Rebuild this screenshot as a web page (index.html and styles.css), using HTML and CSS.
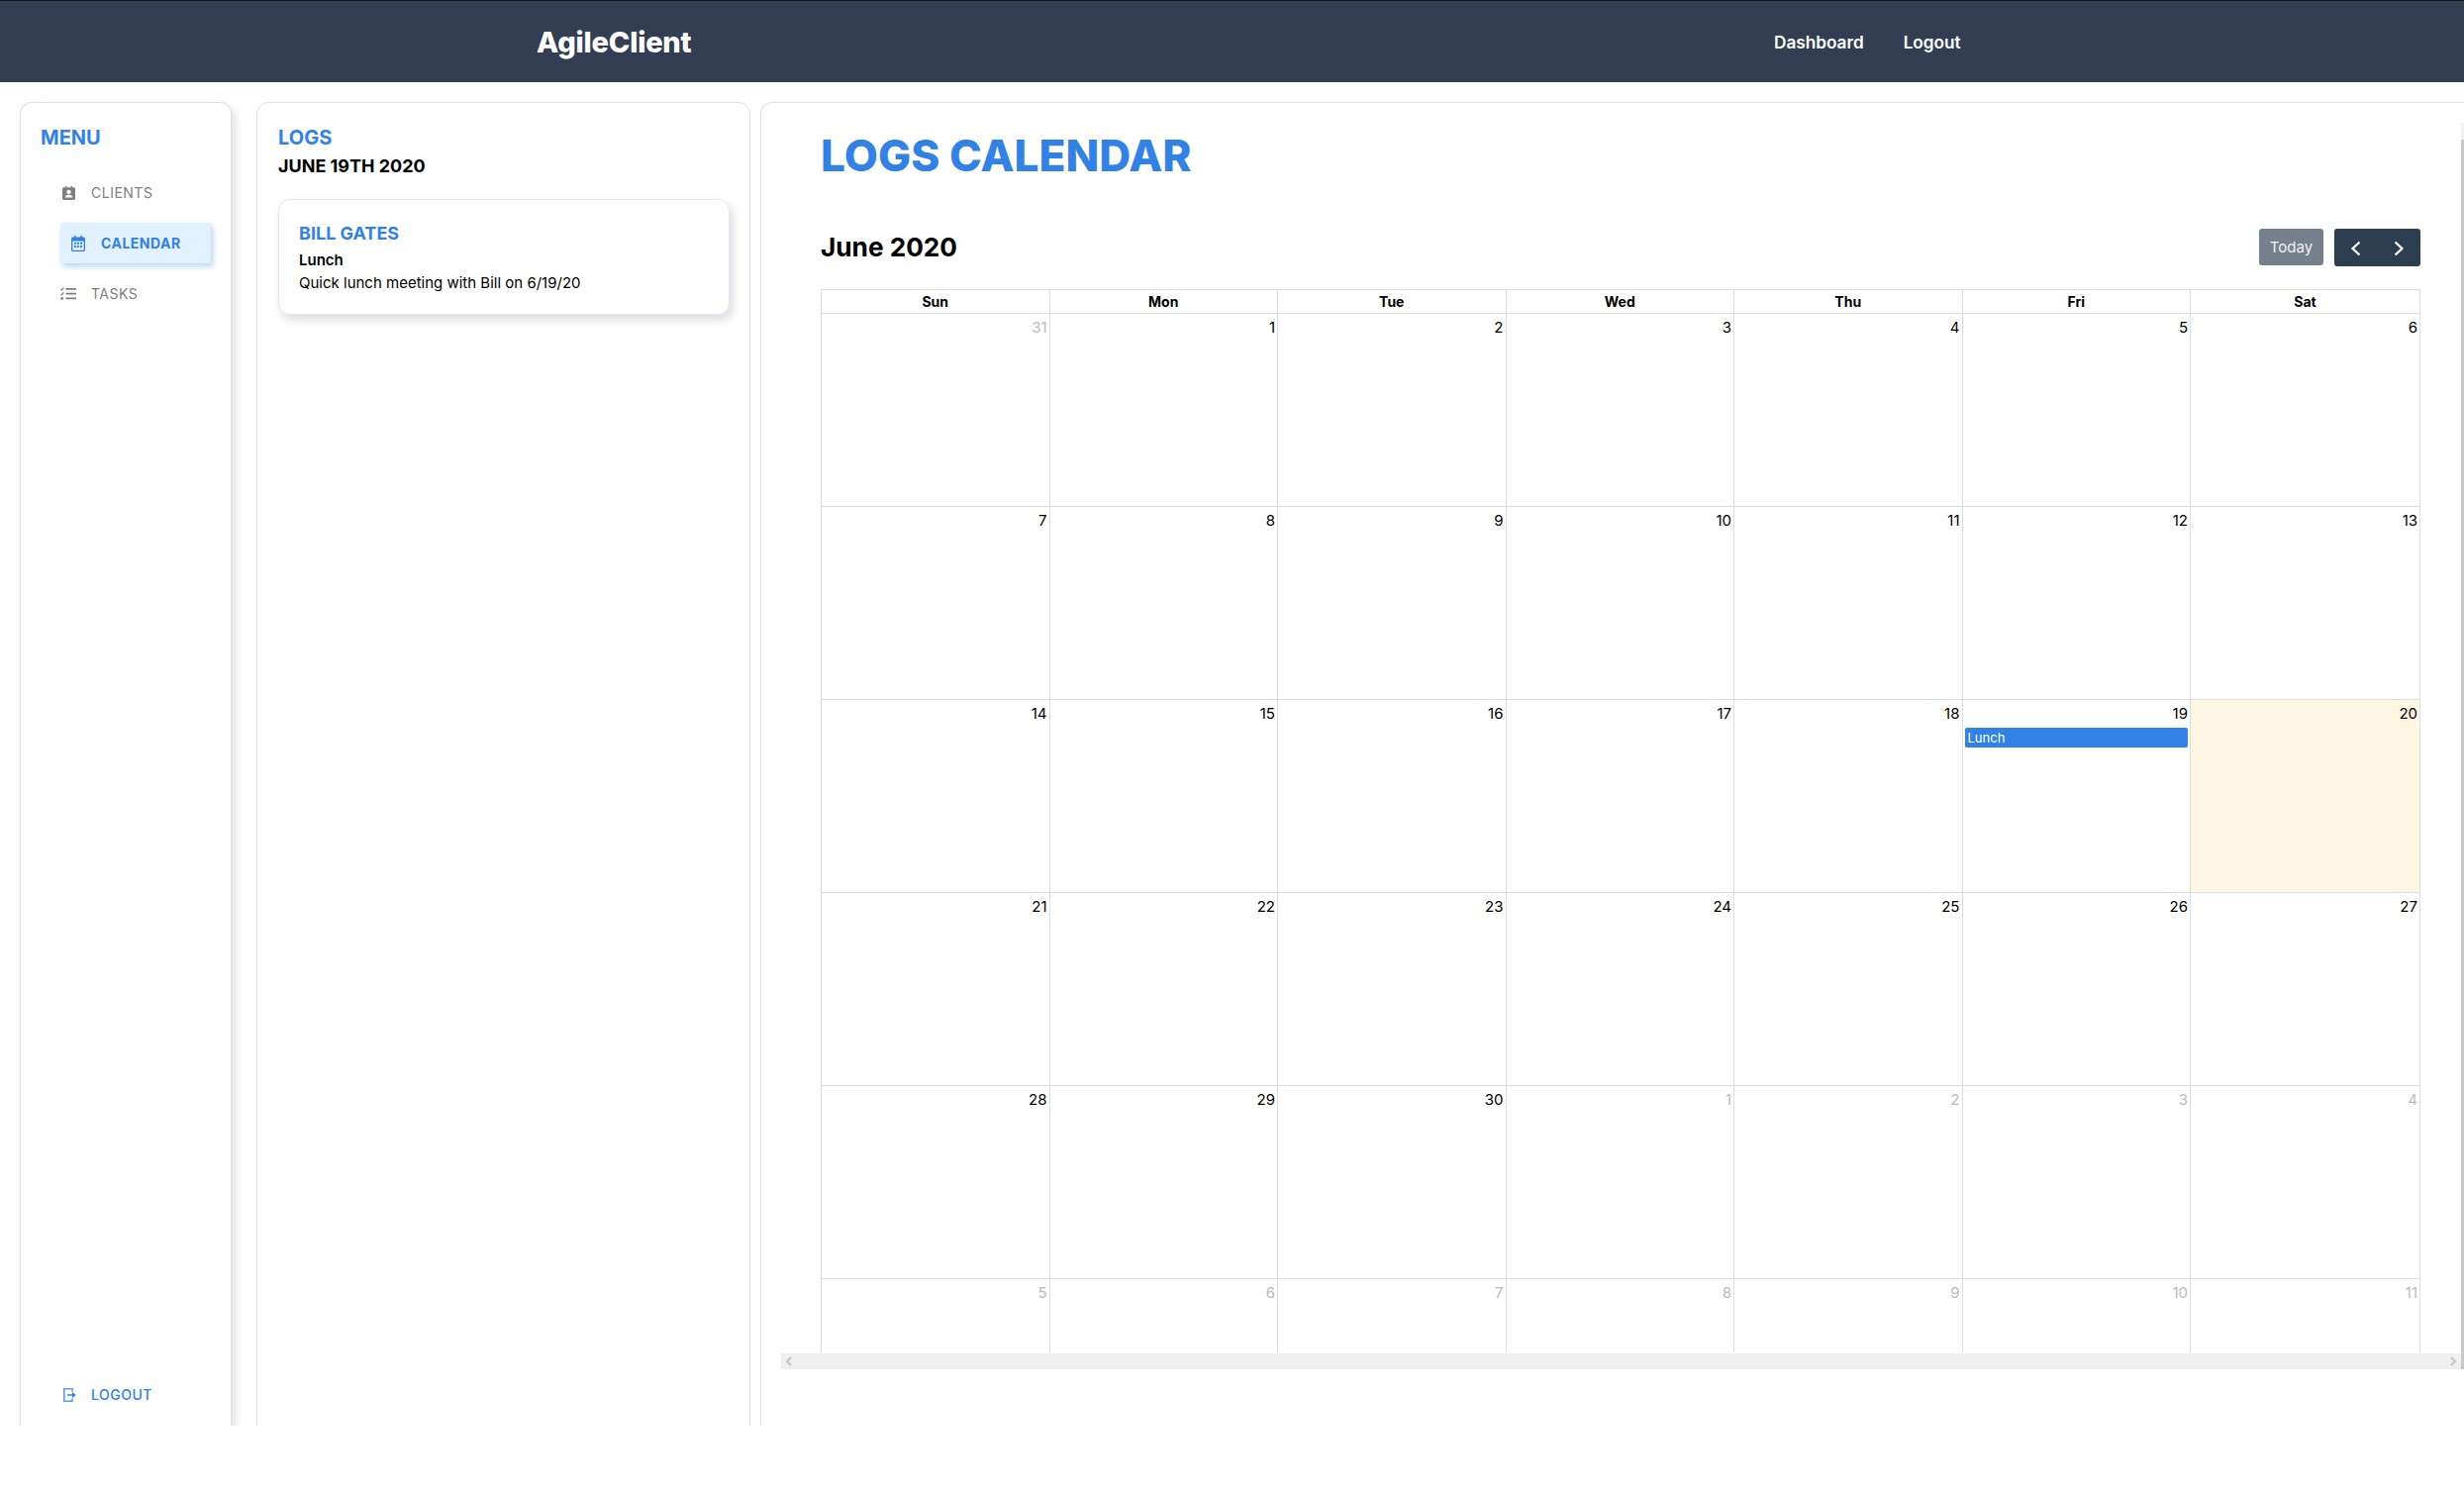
FILE: index.html
```html
<!DOCTYPE html>
<html lang="en">
<head>
  <meta charset="UTF-8">
  <title>AgileClient</title>
  <link rel="stylesheet" href="styles.css">
</head>
<body>

<div class="page">
  <header class="navbar">
    <a class="brand">AgileClient</a>
    <nav class="nav-links">
      <a>Dashboard</a>
      <a>Logout</a>
    </nav>
  </header>

  <div class="columns">
    <aside class="panel sidebar">
      <h2 class="panel-title">MENU</h2>
      <ul class="menu">
        <li class="menu-item">
          <svg class="icon icon-clients" width="13" height="14" viewBox="0 0 13 14">
            <path fill="#808080" fill-rule="evenodd" d="M3 0h1.400v1.200h4.200V0H10v1.200h1.600c.8 0 1.400.6 1.400 1.400v10c0 .8-.6 1.400-1.400 1.400H1.400C.6 14 0 13.400 0 12.600v-10c0-.8.600-1.400 1.400-1.400H3zM6.500 3.800a2.100 2.100 0 1 0 0 4.200 2.100 2.100 0 0 0 0-4.200zM2.800 11.500h7.400c0-1.600-1.400-2.700-3.700-2.700s-3.700 1.100-3.700 2.700z"/>
          </svg>
          <span>CLIENTS</span>
        </li>
        <li class="menu-item active">
          <svg class="icon" width="14" height="16" viewBox="0 0 14 16">
            <path fill="#3182e4" fill-rule="evenodd" d="M3 0h1.600v1.600h4.800V0H11v1.600h1.500c.8 0 1.500.7 1.500 1.500v11.400c0 .8-.7 1.500-1.500 1.500h-11C.7 16 0 15.300 0 14.500V3.100c0-.8.700-1.500 1.500-1.500H3zM1.300 5.400v9c0 .2.100.3.300.3h10.800c.2 0 .3-.1.300-.3v-9z"/>
            <path fill="#3182e4" d="M3 6.700h2v2H3zM6 6.700h2v2H6zM9 6.700h2v2H9zM3 10h2v2H3zM6 10h2v2H6zM9 10h2v2H9z"/>
          </svg>
          <span>CALENDAR</span>
        </li>
        <li class="menu-item">
          <svg class="icon" width="16" height="13" viewBox="0 0 16 13">
            <path fill="none" stroke="#808080" stroke-width="1.200" d="M.5 2l1 1L3.400.5M.5 6.800l1 1 1.900-2.500"/>
            <circle cx="1.700" cy="11.500" r="1.400" fill="#808080"/>
            <path fill="#808080" d="M5.500 1h10.500v1.800H5.500zM5.500 5.700h10.500v1.800H5.500zM5.500 10.500h10.500v1.800H5.500z"/>
          </svg>
          <span>TASKS</span>
        </li>
      </ul>
      <div class="menu-item logout">
        <svg class="icon icon-logout" width="13" height="14" viewBox="0 0 13 14">
          <path fill="none" stroke="#5b9cea" stroke-width="1.600" d="M9 3.500V.8H.8v12.400H9v-2.700"/>
          <path fill="#3182e4" d="M4 6.200h5V4l3.800 3L9 10V7.800H4z"/>
        </svg>
        <span>LOGOUT</span>
      </div>
    </aside>

    <section class="panel logs">
      <h2 class="panel-title">LOGS</h2>
      <h3 class="logs-date">JUNE 19TH 2020</h3>
      <div class="log-card">
        <h4 class="log-name">BILL GATES</h4>
        <div class="log-type">Lunch</div>
        <div class="log-text">Quick lunch meeting with Bill on 6/19/20</div>
      </div>
    </section>

    <main class="panel calendar-panel">
      <div class="calendar-scroll">
        <h1 class="page-title">LOGS CALENDAR</h1>
        <div class="toolbar">
          <h2 class="month">June 2020</h2>
          <div class="toolbar-buttons">
            <button class="btn-today">Today</button>
            <div class="btn-group">
              <button class="btn-nav">
                <svg width="12" height="16" viewBox="0 0 12 16"><path fill="none" stroke="#fff" stroke-width="2.200" d="M9.500 1.500L2.500 8l7 6.500"/></svg>
              </button>
              <button class="btn-nav">
                <svg width="12" height="16" viewBox="0 0 12 16"><path fill="none" stroke="#fff" stroke-width="2.200" d="M2.500 1.500l7 6.500-7 6.500"/></svg>
              </button>
            </div>
          </div>
        </div>
        <table class="calendar">
          <thead>
            <tr><th>Sun</th><th>Mon</th><th>Tue</th><th>Wed</th><th>Thu</th><th>Fri</th><th>Sat</th></tr>
          </thead>
          <tbody>
            <tr>
              <td class="other">31</td><td>1</td><td>2</td><td>3</td><td>4</td><td>5</td><td>6</td>
            </tr>
            <tr>
              <td>7</td><td>8</td><td>9</td><td>10</td><td>11</td><td>12</td><td>13</td>
            </tr>
            <tr>
              <td>14</td><td>15</td><td>16</td><td>17</td><td>18</td>
              <td>19<div class="event">Lunch</div></td>
              <td class="today">20</td>
            </tr>
            <tr>
              <td>21</td><td>22</td><td>23</td><td>24</td><td>25</td><td>26</td><td>27</td>
            </tr>
            <tr>
              <td>28</td><td>29</td><td>30</td><td class="other">1</td><td class="other">2</td><td class="other">3</td><td class="other">4</td>
            </tr>
            <tr>
              <td class="other">5</td><td class="other">6</td><td class="other">7</td><td class="other">8</td><td class="other">9</td><td class="other">10</td><td class="other">11</td>
            </tr>
          </tbody>
        </table>
      </div>
      <div class="hscroll">
        <svg width="8" height="10" viewBox="0 0 8 10"><path fill="none" stroke="#c4c4c4" stroke-width="2" d="M6 1L2 5l4 4"/></svg>
        <svg width="8" height="10" viewBox="0 0 8 10"><path fill="none" stroke="#c4c4c4" stroke-width="2" d="M2 1l4 4-4 4"/></svg>
      </div>
      <div class="vscroll"><div class="vscroll-thumb"></div></div>
    </main>
  </div>
</div>

</body>
</html>
```

FILE: styles.css
```css
* {
  box-sizing: border-box;
}

body {
  margin: 0;
  background: #fff;
  color: #000;
  font-family: Inter, "Liberation Sans", sans-serif;
}

h1, h2, h3, h4, ul {
  margin: 0;
  padding: 0;
}

.page {
  height: 1440px;
  overflow: hidden;
}

.navbar {
  height: 83px;
  background: #343e53;
  border-top: 1px solid #14161c;
  color: #fff;
  display: flex;
  align-items: center;
  padding-left: 542px;
}

.brand {
  font-size: 29px;
  font-weight: 800;
  letter-spacing: -0.2px;
  width: 1250px;
}

.nav-links {
  display: flex;
  gap: 40px;
  font-size: 17.200px;
  font-weight: 600;
}

.columns {
  display: flex;
  padding: 20px 0 0 20px;
  height: 1357px;
}

.panel {
  background: #fff;
  border: 1px solid #dfdfe6;
  border-radius: 12px;
  height: 1400px;
}

.sidebar {
  width: 214px;
  padding: 23px 0 0 20px;
  box-shadow: 4px 4px 10px rgba(50, 50, 93, 0.14);
  display: flex;
  flex-direction: column;
  height: 1337px;
  border-bottom: 0;
  border-radius: 12px 12px 0 0;
}

.panel-title {
  font-size: 20px;
  font-weight: 700;
  line-height: 24px;
  color: #3182e4;
}

.menu {
  list-style: none;
  margin: 23px 0 0 20px;
  display: flex;
  flex-direction: column;
  gap: 10px;
}

.menu-item {
  width: 152px;
  height: 41px;
  display: grid;
  grid-template-columns: 31px auto;
  align-items: center;
  font-size: 14px;
  letter-spacing: 0.5px;
  color: #808080;
}

.icon-clients {
  margin-left: 2px;
}

.icon-logout {
  margin-left: 3px;
}

.menu-item.active {
  background: #e1f1ff;
  color: #3182e4;
  font-weight: 700;
  grid-template-columns: 30px auto;
  padding-left: 11px;
  box-shadow: 2px 3px 6px rgba(49, 130, 228, 0.35);
}

.logout {
  margin: auto 0 11px 20px;
  color: #3182e4;
  font-weight: 500;
}

.logs {
  width: 499px;
  margin-left: 25px;
  padding: 23px 20px 0 21px;
}

.logs-date {
  font-size: 18px;
  font-weight: 700;
  line-height: 24px;
  margin-top: 5px;
}

.log-card {
  margin-top: 21px;
  height: 117px;
  padding: 22px 20px 0;
  border: 1px solid #e6e6ec;
  border-radius: 12px;
  box-shadow: 3px 5px 10px rgba(50, 50, 93, 0.18);
}

.log-name {
  font-size: 18px;
  font-weight: 700;
  line-height: 24px;
  color: #3182e4;
}

.log-type {
  font-size: 15px;
  font-weight: 600;
  line-height: 23px;
  margin-top: 3px;
}

.log-text {
  font-size: 15px;
  line-height: 23px;
}

.calendar-panel {
  flex: 1;
  margin-left: 10px;
  position: relative;
  border-right: 0;
  border-radius: 12px 0 0 0;
}

.calendar-scroll {
  height: 1262px;
  margin: 0 3px 0 20px;
  padding: 25px 0 0 40px;
  overflow: hidden;
}

.page-title {
  font-size: 44.200px;
  font-weight: 800;
  line-height: 56px;
  color: #3182e4;
}

.toolbar {
  width: 1616px;
  height: 38px;
  margin-top: 46px;
  display: flex;
  justify-content: space-between;
  align-items: center;
}

.month {
  font-size: 26.200px;
  font-weight: 700;
  line-height: 38px;
}

.toolbar-buttons {
  display: flex;
  gap: 11px;
  align-items: flex-start;
}

.btn-today {
  width: 65px;
  height: 37px;
  border: 0;
  border-radius: 3px;
  background: #76808c;
  color: #f0f1f3;
  font-family: inherit;
  font-size: 15px;
}

.btn-group {
  display: flex;
  width: 87px;
  height: 38px;
  background: #2c3e50;
  border-radius: 3px;
}

.btn-nav {
  flex: 1;
  border: 0;
  padding: 4px 0 0;
  background: none;
}

.calendar {
  width: 1616px;
  margin-top: 23px;
  border-collapse: collapse;
  table-layout: fixed;
}

.calendar th,
.calendar td {
  border: 1px solid #ddd;
}

.calendar th {
  height: 24px;
  font-size: 14px;
  font-weight: 700;
  padding: 0;
}

.calendar th:last-child {
  width: 232px;
}

.calendar td {
  height: 195px;
  padding: 4px 2px 0;
  font-size: 15px;
  line-height: 20px;
  text-align: right;
  vertical-align: top;
}

.calendar td.other {
  color: #bbb;
}

.calendar td.today {
  background: #fdf6e3;
}

.event {
  height: 20px;
  margin-top: 4px;
  padding-left: 3px;
  background: #3182e4;
  border-radius: 2px;
  color: #fff;
  font-size: 13px;
  line-height: 20px;
  text-align: left;
}

.hscroll {
  height: 16px;
  margin: 1px 3px 0 20px;
  background: #efefef;
  display: flex;
  align-items: center;
  justify-content: space-between;
  padding: 0 4px;
}

.vscroll {
  position: absolute;
  top: 20px;
  right: 0;
  height: 1259px;
  width: 3px;
  background: #f1f1f1;
}

.vscroll-thumb {
  height: 1242px;
  margin-top: 17px;
  background: #c8c8c8;
}
```
